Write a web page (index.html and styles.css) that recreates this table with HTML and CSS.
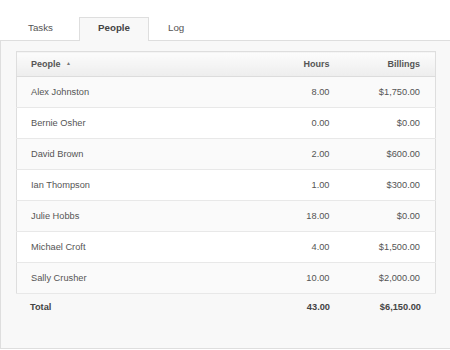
FILE: index.html
```html
<!DOCTYPE html>
<html>
<head>
<meta charset="utf-8">
<link rel="stylesheet" href="styles.css">
</head>
<body>
<div class="tabs">
  <div class="tab">Tasks</div>
  <div class="tab active">People</div>
  <div class="tab">Log</div>
</div>
<div class="panel">
  <table class="grid">
    <colgroup><col><col class="c-hours"><col class="c-bill"></colgroup>
    <thead>
      <tr><th class="name">People <span class="sort">&#9650;</span></th><th class="num">Hours</th><th class="num last">Billings</th></tr>
    </thead>
    <tbody>
      <tr><td class="name">Alex Johnston</td><td class="num">8.00</td><td class="num last">$1,750.00</td></tr>
      <tr><td class="name">Bernie Osher</td><td class="num">0.00</td><td class="num last">$0.00</td></tr>
      <tr><td class="name">David Brown</td><td class="num">2.00</td><td class="num last">$600.00</td></tr>
      <tr><td class="name">Ian Thompson</td><td class="num">1.00</td><td class="num last">$300.00</td></tr>
      <tr><td class="name">Julie Hobbs</td><td class="num">18.00</td><td class="num last">$0.00</td></tr>
      <tr><td class="name">Michael Croft</td><td class="num">4.00</td><td class="num last">$1,500.00</td></tr>
      <tr><td class="name">Sally Crusher</td><td class="num">10.00</td><td class="num last">$2,000.00</td></tr>
    </tbody>
  </table>
  <table class="totals">
    <colgroup><col><col class="c-hours"><col class="c-bill"></colgroup>
    <tr><td class="name">Total</td><td class="num">43.00</td><td class="num last">$6,150.00</td></tr>
  </table>
</div>
</body>
</html>
```

FILE: styles.css
```css
html, body {
  margin: 0;
  padding: 0;
  background: #ffffff;
  font-family: "Liberation Sans", Arial, Helvetica, sans-serif;
  color: #555555;
  overflow: hidden;
}

.tabs {
  display: flex;
  padding: 17px 0 0 9px;
  position: relative;
  z-index: 1;
}

.tab {
  width: 70px;
  box-sizing: border-box;
  height: 24px;
  padding: 4px 0 0 18px;
  font-size: 9.75px;
  line-height: 12px;
  color: #555555;
  border: 1px solid transparent;
  border-bottom: none;
}

.tab.active {
  background: #f8f8f8;
  border-color: #dedede;
  font-weight: bold;
  color: #444444;
}

.panel {
  margin-top: -1px;
  margin-right: -2px;
  height: 309px;
  border: 1px solid #dedede;
  background: #f8f8f8;
  padding: 10px 0 0 15px;
  box-sizing: border-box;
}

table {
  border-collapse: collapse;
  table-layout: fixed;
  width: 420px;
}

.c-hours { width: 107px; }
.c-bill { width: 106px; }

.grid {
  border: 1px solid #dedede;
  background: #ffffff;
}

.grid th {
  height: 24px;
  padding: 0;
  font-size: 9px;
  font-weight: bold;
  color: #555555;
  background: linear-gradient(#fcfcfc, #ededed);
  border-bottom: 1px solid #dcdcdc;
  text-align: left;
}

.grid td {
  height: 30px;
  padding: 0;
  font-size: 9.25px;
  color: #555555;
  border-bottom: 1px solid #e8e8e8;
}

.grid tbody tr:nth-child(odd) td {
  background: #fafafa;
}

.name {
  padding-left: 14px !important;
  text-align: left;
}

.num {
  text-align: right !important;
}

.last {
  padding-right: 15px !important;
}

.sort {
  font-size: 5px;
  color: #777777;
  margin-left: 3px;
  vertical-align: 2px;
}

.totals td {
  height: 26px;
  padding: 0;
  font-size: 9.25px;
  font-weight: bold;
  color: #444444;
}
```
